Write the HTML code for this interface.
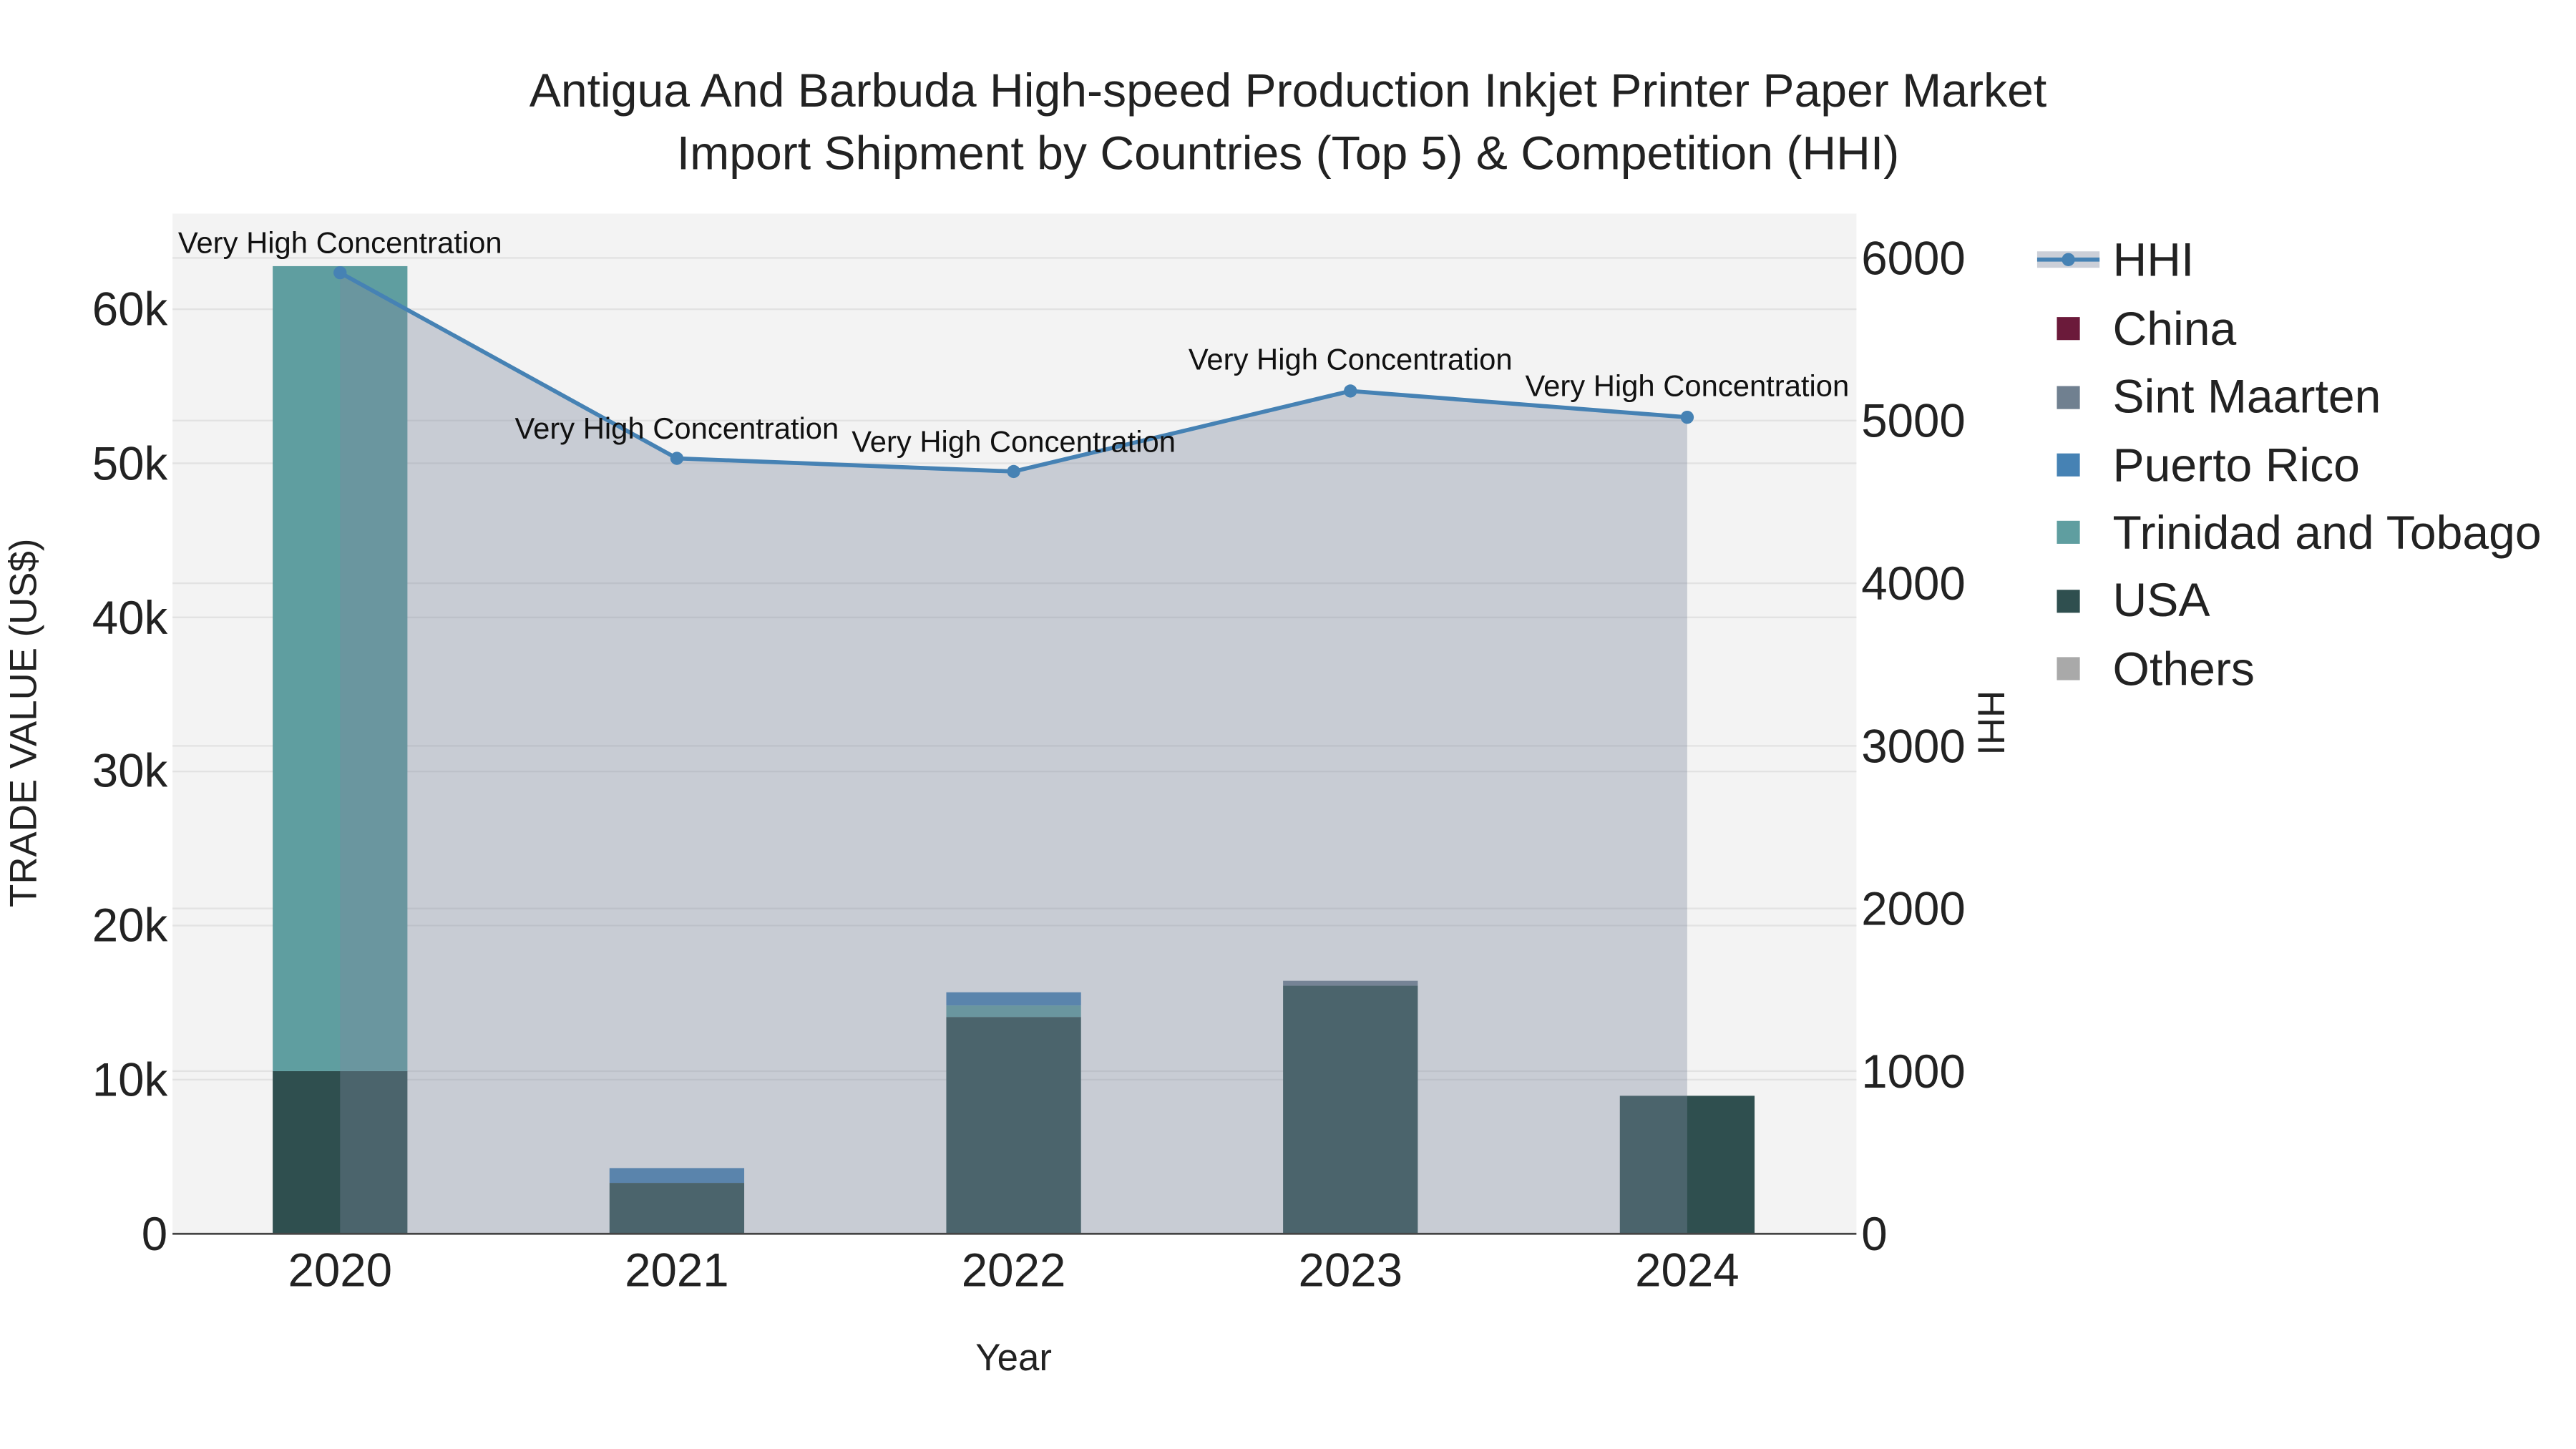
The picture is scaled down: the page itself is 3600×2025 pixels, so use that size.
<!DOCTYPE html>
<html><head><meta charset="utf-8"><style>html,body{margin:0;padding:0;background:#fff}svg{display:block}</style></head>
<body>
<svg width="3600" height="2025" viewBox="0 0 1568 882" xmlns="http://www.w3.org/2000/svg" font-family="Liberation Sans, Arial, sans-serif">
<rect x="0" y="0" width="1568" height="882" fill="#fff"/>
<rect x="105" y="130" width="1025" height="621" fill="#f3f3f3"/>
<g stroke="#e2e2e2" stroke-width="1">
<line x1="105" x2="1130" y1="657.2" y2="657.2"/><line x1="105" x2="1130" y1="563.4" y2="563.4"/><line x1="105" x2="1130" y1="469.6" y2="469.6"/><line x1="105" x2="1130" y1="375.8" y2="375.8"/><line x1="105" x2="1130" y1="282" y2="282"/><line x1="105" x2="1130" y1="188.2" y2="188.2"/>
<line x1="105" x2="1130" y1="652" y2="652"/><line x1="105" x2="1130" y1="553" y2="553"/><line x1="105" x2="1130" y1="454" y2="454"/><line x1="105" x2="1130" y1="355" y2="355"/><line x1="105" x2="1130" y1="256" y2="256"/><line x1="105" x2="1130" y1="157" y2="157"/>
</g>
<rect x="166" y="652" width="82" height="99" fill="#2f4f4f"/>
<rect x="166" y="162" width="82" height="490" fill="#5f9ea0"/>
<rect x="371" y="720" width="82" height="31" fill="#2f4f4f"/>
<rect x="371" y="711" width="82" height="9" fill="#4682b4"/>
<rect x="576" y="619" width="82" height="132" fill="#2f4f4f"/>
<rect x="576" y="612" width="82" height="7" fill="#5f9ea0"/>
<rect x="576" y="604" width="82" height="8" fill="#4682b4"/>
<rect x="781" y="600" width="82" height="151" fill="#2f4f4f"/>
<rect x="781" y="597" width="82" height="3" fill="#708090"/>
<rect x="986" y="667" width="82" height="84" fill="#2f4f4f"/>
<polygon points="207,751 207,166 412,279 617,287 822,238 1027,254 1027,751" fill="rgb(125,136,158)" fill-opacity="0.365"/>
<polyline points="207,166 412,279 617,287 822,238 1027,254" fill="none" stroke="#4682b4" stroke-width="2.5"/>
<g fill="#4682b4"><circle cx="207" cy="166" r="4"/><circle cx="412" cy="279" r="4"/><circle cx="617" cy="287" r="4"/><circle cx="822" cy="238" r="4"/><circle cx="1027" cy="254" r="4"/></g>
<line x1="105" x2="1130" y1="751" y2="751" stroke="#444" stroke-width="1.2"/>
<g font-size="18.2" fill="#111" text-anchor="middle">
<text x="207" y="154">Very High Concentration</text>
<text x="412" y="267">Very High Concentration</text>
<text x="617" y="275">Very High Concentration</text>
<text x="822" y="225">Very High Concentration</text>
<text x="1027" y="241">Very High Concentration</text>
</g>
<g font-size="28.8" fill="#222" text-anchor="middle">
<text x="784" y="65">Antigua And Barbuda High-speed Production Inkjet Printer Paper Market</text>
<text x="784" y="103">Import Shipment by Countries (Top 5) &amp; Competition (HHI)</text>
</g>
<g font-size="28.5" fill="#222" text-anchor="end">
<text x="102" y="761">0</text><text x="102" y="667">10k</text><text x="102" y="573">20k</text><text x="102" y="479">30k</text><text x="102" y="386">40k</text><text x="102" y="292">50k</text><text x="102" y="198">60k</text>
</g>
<g font-size="28.5" fill="#222">
<text x="1133" y="761">0</text><text x="1133" y="662">1000</text><text x="1133" y="563">2000</text><text x="1133" y="464">3000</text><text x="1133" y="365">4000</text><text x="1133" y="266">5000</text><text x="1133" y="167">6000</text>
</g>
<g font-size="28.5" fill="#222" text-anchor="middle">
<text x="207" y="783">2020</text><text x="412" y="783">2021</text><text x="617" y="783">2022</text><text x="822" y="783">2023</text><text x="1027" y="783">2024</text>
</g>
<text x="617" y="834" font-size="23" fill="#222" text-anchor="middle">Year</text>
<text transform="translate(22,440) rotate(-90)" font-size="23" fill="#222" text-anchor="middle">TRADE VALUE (US$)</text>
<text transform="translate(1204,440) rotate(90)" font-size="23" fill="#222" text-anchor="middle">HHI</text>
<rect x="1240" y="153" width="38" height="10" fill="rgb(125,136,158)" fill-opacity="0.4"/>
<line x1="1240" x2="1278" y1="158" y2="158" stroke="#4682b4" stroke-width="2.5"/>
<circle cx="1259" cy="158" r="4" fill="#4682b4"/>
<rect x="1252" y="193" width="14" height="14" fill="#6b1a3a"/>
<rect x="1252" y="235" width="14" height="14" fill="#708090"/>
<rect x="1252" y="276" width="14" height="14" fill="#4682b4"/>
<rect x="1252" y="317" width="14" height="14" fill="#5f9ea0"/>
<rect x="1252" y="359" width="14" height="14" fill="#2f4f4f"/>
<rect x="1252" y="400" width="14" height="14" fill="#a9a9a9"/>
<g font-size="28.8" fill="#222">
<text x="1286" y="168">HHI</text>
<text x="1286" y="210">China</text>
<text x="1286" y="251">Sint Maarten</text>
<text x="1286" y="293">Puerto Rico</text>
<text x="1286" y="334">Trinidad and Tobago</text>
<text x="1286" y="375">USA</text>
<text x="1286" y="417">Others</text>
</g>
</svg>
</body></html>
